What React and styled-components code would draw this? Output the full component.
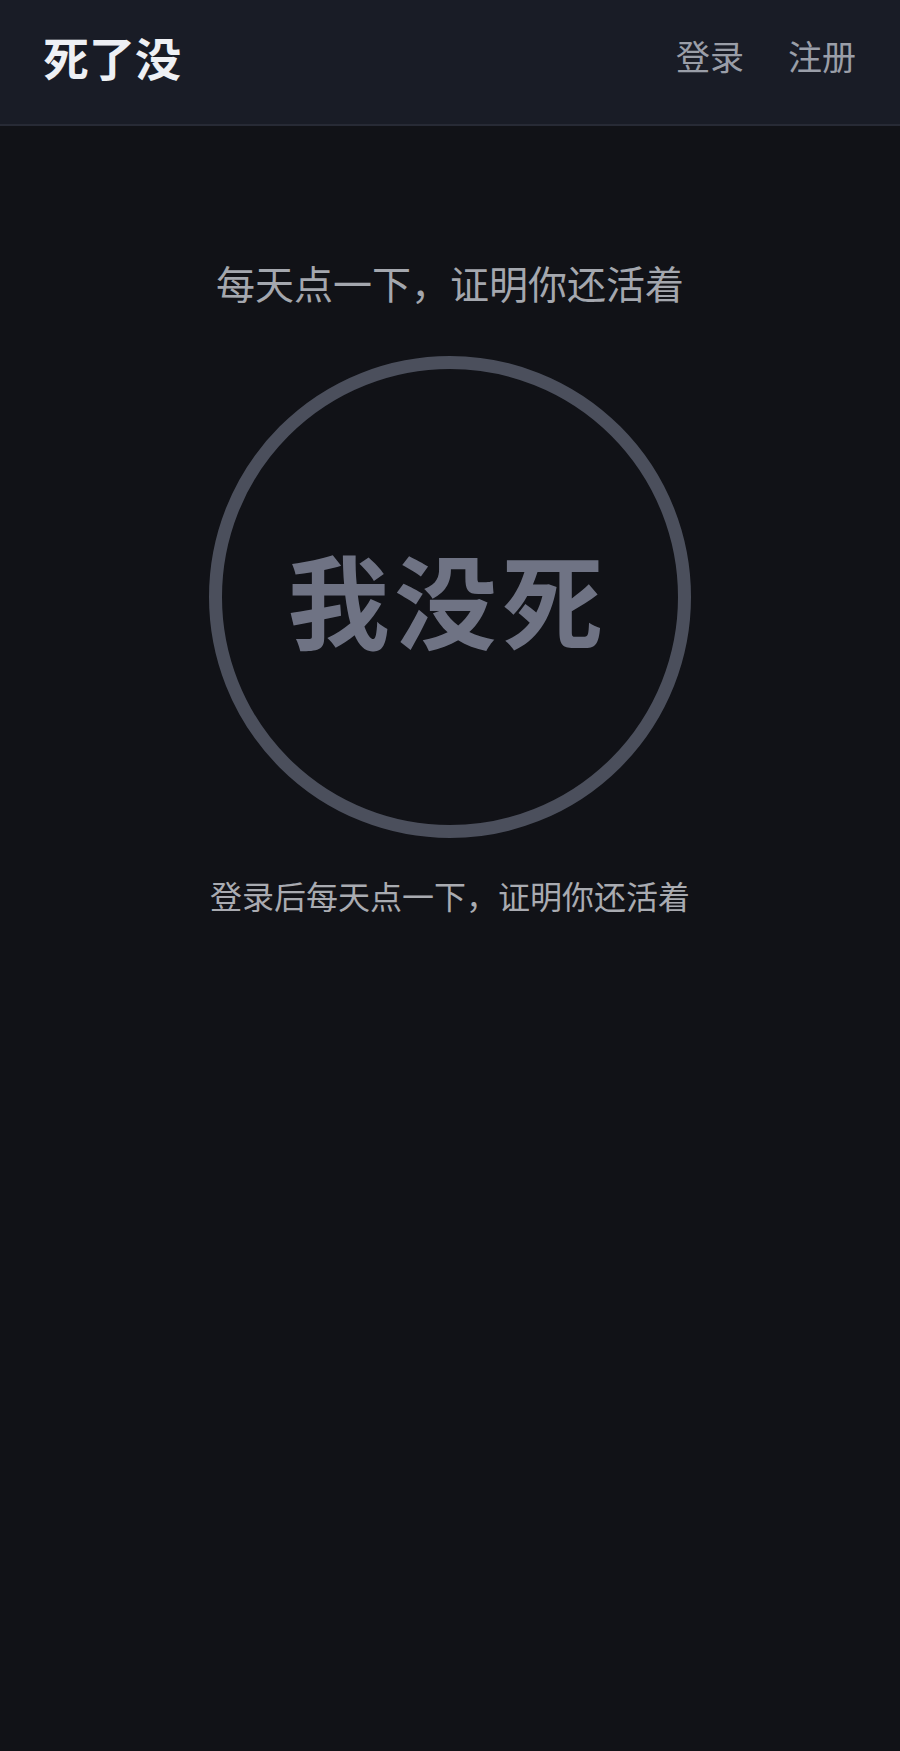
import React from "react";
import styled, { createGlobalStyle } from "styled-components";

const Global = createGlobalStyle`
  html, body {
    margin: 0;
    padding: 0;
    background: #111217;
  }
  body {
    font-family: "Noto Sans CJK SC", "Noto Sans", sans-serif;
    -webkit-font-smoothing: antialiased;
  }
  * { box-sizing: border-box; }
`;

const Page = styled.div`
  min-height: 1751px;
  background: #111217;
  display: flex;
  flex-direction: column;
`;

const Header = styled.header`
  height: 126px;
  padding: 0 44px 12px 44px;
  background: #191c26;
  border-bottom: 2px solid #272a35;
  display: flex;
  align-items: center;
  justify-content: space-between;
`;

const Logo = styled.div`
  font-size: 46px;
  line-height: 1;
  font-weight: 700;
  color: #eef0f4;
  margin-left: -1px;
`;

const Nav = styled.nav`
  display: flex;
  align-items: center;
  gap: 44px;
`;

const NavLink = styled.a`
  font-size: 34px;
  line-height: 1;
  color: #9a9ea8;
  text-decoration: none;
  cursor: pointer;
`;

const Main = styled.main`
  display: flex;
  flex-direction: column;
  align-items: center;
  padding-top: 132px;
`;

const Title = styled.p`
  margin: 0;
  font-size: 39px;
  line-height: 48px;
  color: #a4a7ae;
`;

const CheckButton = styled.button`
  margin-top: 50px;
  width: 482px;
  height: 482px;
  border-radius: 50%;
  border: 13px solid #4b4f5c;
  background: transparent;
  display: flex;
  align-items: center;
  justify-content: center;
  font-family: inherit;
  font-size: 102px;
  font-weight: 700;
  letter-spacing: 5px;
  color: #6f7384;
  cursor: pointer;
  padding: 0 4px 0 0;
`;

const Hint = styled.p`
  margin: 38px 0 0 0;
  font-size: 32px;
  line-height: 38px;
  color: #a9abb1;
`;

export default function App() {
  return (
    <>
      <Global />
      <Page>
        <Header>
          <Logo>死了没</Logo>
          <Nav>
            <NavLink>登录</NavLink>
            <NavLink>注册</NavLink>
          </Nav>
        </Header>
        <Main>
          <Title>每天点一下，证明你还活着</Title>
          <CheckButton>我没死</CheckButton>
          <Hint>登录后每天点一下，证明你还活着</Hint>
        </Main>
      </Page>
    </>
  );
}
